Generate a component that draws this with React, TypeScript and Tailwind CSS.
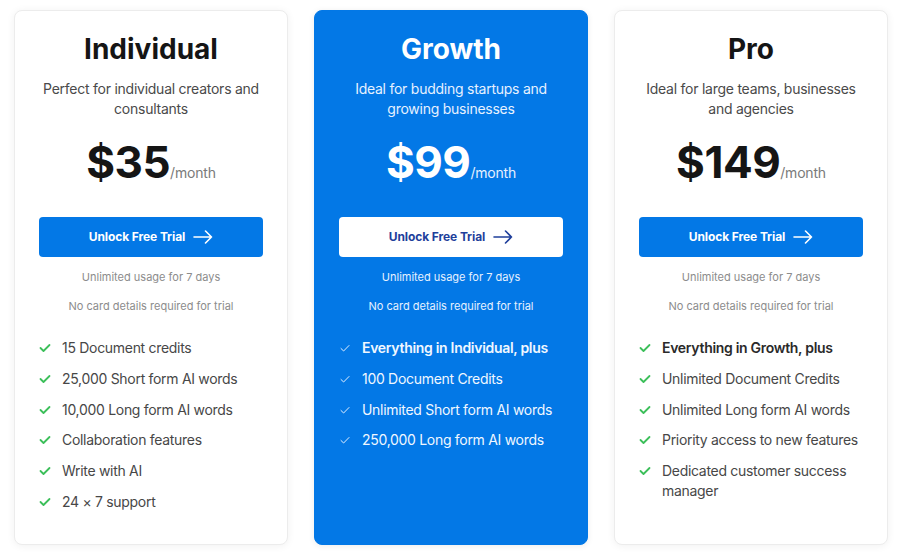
import React from "react";

type Plan = {
  name: string;
  desc: string[];
  price: string;
  features: { text: string; bold?: boolean }[];
  featured?: boolean;
};

const plans: Plan[] = [
  {
    name: "Individual",
    desc: ["Perfect for individual creators and", "consultants"],
    price: "$35",
    features: [
      { text: "15 Document credits" },
      { text: "25,000 Short form AI words" },
      { text: "10,000 Long form AI words" },
      { text: "Collaboration features" },
      { text: "Write with AI" },
      { text: "24 × 7 support" },
    ],
  },
  {
    name: "Growth",
    desc: ["Ideal for budding startups and", "growing businesses"],
    price: "$99",
    featured: true,
    features: [
      { text: "Everything in Individual, plus", bold: true },
      { text: "100 Document Credits" },
      { text: "Unlimited Short form AI words" },
      { text: "250,000 Long form AI words" },
    ],
  },
  {
    name: "Pro",
    desc: ["Ideal for large teams, businesses", "and agencies"],
    price: "$149",
    features: [
      { text: "Everything in Growth, plus", bold: true },
      { text: "Unlimited Document Credits" },
      { text: "Unlimited Long form AI words" },
      { text: "Priority access to new features" },
      { text: "Dedicated customer success manager" },
    ],
  },
];

function Check({ featured }: { featured?: boolean }) {
  if (featured) {
    return (
      <svg width="12" height="20" viewBox="0 0 12 20" className="shrink-0">
        <path d="M2 10.5 L4.6 13 L10 7.5" fill="none" stroke="#e3efff" strokeWidth="1" strokeLinecap="round" strokeLinejoin="round" />
      </svg>
    );
  }
  return (
    <svg width="12" height="20" viewBox="0 0 12 20" className="shrink-0">
      <path d="M1.5 10 L4.5 13 L10.5 7" fill="none" stroke="#3cbf5a" strokeWidth="1.8" strokeLinecap="round" strokeLinejoin="round" />
    </svg>
  );
}

function Arrow({ color }: { color: string }) {
  return (
    <svg width="20" height="14" viewBox="0 0 20 14">
      <path d="M1 7 H18.5 M12.5 1 L18.5 7 L12.5 13" fill="none" stroke={color} strokeWidth="1.6" strokeLinecap="round" strokeLinejoin="round" />
    </svg>
  );
}

function Card({ plan }: { plan: Plan }) {
  const f = plan.featured;
  return (
    <div
      className={
        "w-[274px] rounded-[8px] border px-6 pt-5 pb-8 flex flex-col " +
        (f
          ? "bg-[#0378e6] border-[#0378e6] shadow-[0_1px_6px_rgba(0,0,0,0.08)]"
          : "bg-white border-[#ececec] shadow-[0_1px_8px_rgba(0,0,0,0.06)]")
      }
    >
      <h2 className={"text-center text-[28px] leading-[36px] font-bold " + (f ? "text-white" : "text-[#151515]")}>
        {plan.name}
      </h2>
      <p
        className={
          "mt-3 text-center text-[14px] leading-[20px] tracking-[-0.25px] whitespace-nowrap " +
          (f ? "text-[#e6f1ff]" : "text-[#4a4a4a]")
        }
      >
        {plan.desc[0]}
        <br />
        {plan.desc[1]}
      </p>
      <div className="mt-[19px] flex items-baseline justify-center h-[48px]">
        <span className={"text-[44px] leading-[48px] font-bold tracking-[-0.5px] " + (f ? "text-white" : "text-[#151515]")}>
          {plan.price}
        </span>
        <span className={"text-[14px] tracking-[-0.2px] " + (f ? "text-[#e6f1ff]" : "text-[#7a7a7a]")}>/month</span>
      </div>
      <button
        className={
          "mt-[31px] h-[40px] w-full rounded-[4px] flex items-center justify-center gap-[8px] text-[12px] font-bold tracking-[-0.1px] " +
          (f ? "bg-white text-[#1f3f9b]" : "bg-[#0378e6] text-white")
        }
      >
        <span>Unlock Free Trial</span>
        <Arrow color={f ? "#1f3f9b" : "#ffffff"} />
      </button>
      <p className={"mt-3 text-center text-[11px] leading-[16px] " + (f ? "text-[#e6f1ff]" : "text-[#8c8c8c]")}>
        Unlimited usage for 7 days
      </p>
      <p className={"mt-[13px] text-center text-[11px] leading-[16px] " + (f ? "text-[#e6f1ff]" : "text-[#8c8c8c]")}>
        No card details required for trial
      </p>
      <ul className="mt-6 flex flex-col gap-[10.8px]">
        {plan.features.map((ft) => (
          <li key={ft.text} className="flex items-start gap-[11px]">
            <Check featured={f} />
            <span
              className={
                "text-[14px] leading-[20px] tracking-[-0.3px] " +
                (ft.bold ? "font-semibold " : "") +
                (f ? "text-[#f0f7ff]" : ft.bold ? "text-[#2a2a2a]" : "text-[#474747]")
              }
            >
              {ft.text}
            </span>
          </li>
        ))}
      </ul>
    </div>
  );
}

export default function App() {
  return (
    <div
      className="w-[906px] h-[557px] bg-white flex items-start pl-[14px] pt-[10px]"
      style={{ fontFamily: "Inter, 'Noto Sans', sans-serif" }}
    >
      <div className="flex items-stretch gap-[26px]">
        {plans.map((p) => (
          <Card key={p.name} plan={p} />
        ))}
      </div>
    </div>
  );
}
